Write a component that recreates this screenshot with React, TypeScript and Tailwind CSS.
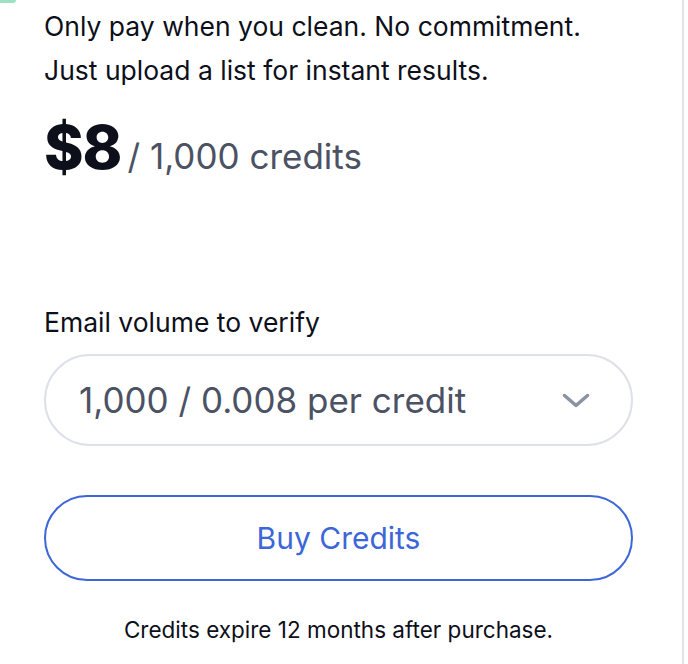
export default function App() {
  return (
    <div className="relative h-[664px] w-[688px] overflow-hidden bg-white font-['Inter',sans-serif] text-[#0d0f1a]">
      <div className="absolute left-0 top-0 h-[3px] w-[16px] rounded-br-sm bg-[#9fe0c4]" />
      <div className="flex h-full w-[684px] flex-col border-r-2 border-[#e3e3ef] pl-[44px] pr-[49px]">
        <div className="pt-[4px] text-[26.5px] leading-[44px]">
          <p>Only pay when you clean. No commitment.</p>
          <p>Just upload a list for instant results.</p>
        </div>

        <div className="mt-[25px] flex items-baseline gap-[6px] leading-none">
          <span className="text-[60px] font-extrabold tracking-[-1px]">$8</span>
          <span className="text-[35px] text-[#4b5263]">/ 1,000 credits</span>
        </div>

        <label className="mt-[129px] text-[26.5px] leading-[32px]">Email volume to verify</label>

        <button className="mt-[16px] flex h-[92px] w-full items-center justify-between rounded-full border-2 border-[#dfe1e8] pl-[33px] pr-[41px] text-[35px] text-[#4b5263]">
          <span>1,000 / 0.008 per credit</span>
          <svg width="28" height="15" viewBox="0 0 28 15" fill="none" className="text-[#8b93a3]">
            <polyline points="2.5,2.5 14,12.5 25.5,2.5" stroke="currentColor" strokeWidth="3.5" strokeLinecap="round" strokeLinejoin="round" />
          </svg>
        </button>

        <button className="mt-[49px] flex h-[86px] w-full items-center justify-center rounded-full border-2 border-[#3d66d8] text-[30px] text-[#3d66d8]">
          Buy Credits
        </button>

        <p className="mt-[34px] text-center text-[22.5px] leading-[30px]">Credits expire 12 months after purchase.</p>
      </div>
    </div>
  );
}
